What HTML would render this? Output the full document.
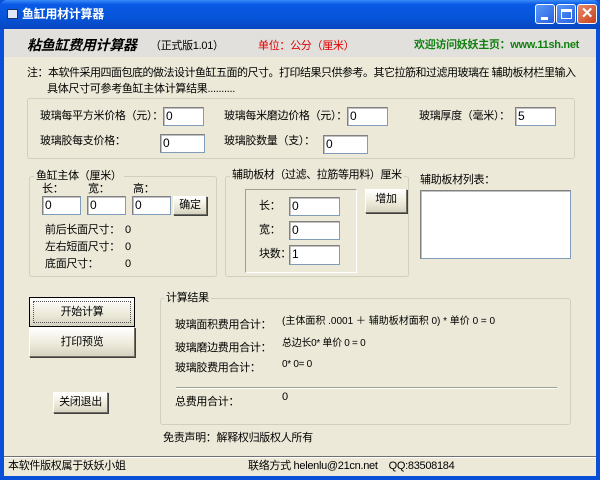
<!DOCTYPE html>
<html><head><meta charset="utf-8"><style>
*{margin:0;padding:0;box-sizing:border-box}
body{width:600px;height:480px;overflow:hidden;background:#0a4fd8;font-family:"Liberation Sans","Noto Sans CJK SC",sans-serif;font-size:11px;letter-spacing:-0.3px;color:#000;position:relative}
.a{position:absolute;white-space:nowrap;line-height:14px}
#title{position:absolute;left:0;top:0;width:600px;height:29px;background:linear-gradient(#3a8cf8 0,#0a5ae6 15%,#0654d8 60%,#0846c0 100%);border-radius:7px 7px 0 0}
#client{position:absolute;left:4px;top:29px;width:592px;height:447px;background:#ece9d8}
#hdr{position:absolute;left:4px;top:29px;width:592px;height:28px;background:#e2e0dc}
.in{position:absolute;background:#fff;border:1px solid #7f9db9;border-top-color:#808080;border-left-color:#808080;box-shadow:inset 1px 1px 0 #c0c0c0;padding-left:2px;line-height:16px;font-size:12px}
.gb{position:absolute;border:1px solid #d0d0bf;border-radius:3px}
.lg{position:absolute;background:#ece9d8;padding:0 2px;line-height:14px;white-space:nowrap}
.btn{position:absolute;background:linear-gradient(#fff,#ece9d8 60%,#d6d2c2);border:1px solid #fff;border-right-color:#716f64;border-bottom-color:#716f64;box-shadow:1px 1px 0 #404040;text-align:center}
.wb{position:absolute;top:4px;width:20px;height:20px;border:1px solid #fff;border-radius:3px;background:linear-gradient(135deg,#5b9af8,#2660e0)}
</style></head><body>
<div id="title"></div>
<div class="a" style="left:7px;top:9px;width:11px;height:10px;background:#dfe8f8;border:1px solid #203060"></div>
<div class="a" style="left:22px;top:7px;color:#fff;font-weight:bold;font-size:12px">鱼缸用材计算器</div>
<div class="wb" style="left:535px"><div style="position:absolute;left:5px;top:12px;width:7px;height:3px;background:#fff"></div></div>
<div class="wb" style="left:556px"><div style="position:absolute;left:4px;top:4px;width:11px;height:10px;border:1px solid #fff;border-top-width:3px"></div></div>
<div class="wb" style="left:577px;background:linear-gradient(135deg,#e88a6a,#c8401c);color:#fff;font-weight:bold;font-size:15px;line-height:18px;text-align:center">✕</div>
<div id="client"></div>
<div id="hdr"></div>
<div class="a" style="left:27px;top:37px;font-size:14px;font-weight:bold;font-style:italic;line-height:17px">粘鱼缸费用计算器</div>
<div class="a" style="left:150px;top:39px">（正式版1.01）</div>
<div class="a" style="left:258px;top:39px;color:#e00000">单位：公分（厘米）</div>
<div class="a" style="left:414px;top:38px;color:#108010;font-weight:bold;letter-spacing:-0.3px">欢迎访问妖妖主页：www.11sh.net</div>
<div class="a" style="left:27px;top:66px;letter-spacing:-0.5px">注：本软件采用四面包底的做法设计鱼缸五面的尺寸。打印结果只供参考。其它拉筋和过滤用玻璃在 辅助板材栏里输入</div>
<div class="a" style="left:47px;top:82px">具体尺寸可参考鱼缸主体计算结果..........</div>

<div class="gb" style="left:27px;top:98px;width:548px;height:61px"></div>
<div class="a" style="left:40px;top:109px">玻璃每平方米价格（元）：</div>
<div class="in" style="left:163px;top:107px;width:41px;height:19px">0</div>
<div class="a" style="left:224px;top:109px">玻璃每米磨边价格（元）：</div>
<div class="in" style="left:347px;top:107px;width:41px;height:19px">0</div>
<div class="a" style="left:419px;top:109px">玻璃厚度（毫米）：</div>
<div class="in" style="left:515px;top:107px;width:41px;height:19px">5</div>
<div class="a" style="left:40px;top:134px">玻璃胶每支价格：</div>
<div class="in" style="left:160px;top:134px;width:45px;height:19px">0</div>
<div class="a" style="left:224px;top:134px">玻璃胶数量（支）：</div>
<div class="in" style="left:323px;top:135px;width:45px;height:19px">0</div>

<div class="gb" style="left:29px;top:176px;width:188px;height:101px"></div>
<div class="lg" style="left:34px;top:169px">鱼缸主体（厘米）</div>
<div class="a" style="left:42px;top:182px">长：</div>
<div class="a" style="left:88px;top:182px">宽：</div>
<div class="a" style="left:133px;top:182px">高：</div>
<div class="in" style="left:42px;top:196px;width:39px;height:19px">0</div>
<div class="in" style="left:87px;top:196px;width:39px;height:19px">0</div>
<div class="in" style="left:132px;top:196px;width:39px;height:19px">0</div>
<div class="btn" style="left:173px;top:196px;width:34px;height:19px;line-height:17px">确定</div>
<div class="a" style="left:45px;top:223px">前后长面尺寸：</div><div class="a" style="left:125px;top:223px">0</div>
<div class="a" style="left:45px;top:240px">左右短面尺寸：</div><div class="a" style="left:125px;top:240px">0</div>
<div class="a" style="left:45px;top:257px">底面尺寸：</div><div class="a" style="left:125px;top:257px">0</div>

<div class="gb" style="left:225px;top:176px;width:184px;height:101px"></div>
<div class="lg" style="left:230px;top:168px;letter-spacing:-0.4px">辅助板材（过滤、拉筋等用料）厘米</div>
<div style="position:absolute;left:245px;top:189px;width:112px;height:84px;border:1px solid #a0a090;border-right-color:#fff;border-bottom-color:#fff"></div>
<div class="a" style="left:259px;top:199px">长：</div>
<div class="in" style="left:289px;top:197px;width:51px;height:19px">0</div>
<div class="a" style="left:259px;top:223px">宽：</div>
<div class="in" style="left:289px;top:221px;width:51px;height:19px">0</div>
<div class="a" style="left:259px;top:247px">块数：</div>
<div class="in" style="left:289px;top:245px;width:51px;height:20px">1</div>
<div class="btn" style="left:365px;top:189px;width:42px;height:24px;line-height:18px">增加</div>
<div class="a" style="left:420px;top:173px">辅助板材列表：</div>
<div class="in" style="left:420px;top:190px;width:151px;height:69px"></div>

<div class="btn" style="left:29px;top:297px;width:106px;height:30px;line-height:28px;border:1px solid #000;box-shadow:none"><div style="position:absolute;left:3px;top:3px;right:3px;bottom:3px;border:1px dotted #555"></div>开始计算</div>
<div class="btn" style="left:29px;top:327px;width:106px;height:30px;line-height:28px">打印预览</div>
<div class="btn" style="left:53px;top:392px;width:55px;height:21px;line-height:19px">关闭退出</div>

<div class="gb" style="left:160px;top:298px;width:411px;height:127px"></div>
<div class="lg" style="left:164px;top:291px">计算结果</div>
<div class="a" style="left:175px;top:318px">玻璃面积费用合计：</div>
<div class="a" style="left:282px;top:315px;font-size:10px;letter-spacing:0px">(主体面积 .0001 ＋ 辅助板材面积 0) * 单价 0 = 0</div>
<div class="a" style="left:175px;top:341px">玻璃磨边费用合计：</div>
<div class="a" style="left:282px;top:337px;font-size:10px">总边长0*  单价 0 = 0</div>
<div class="a" style="left:175px;top:361px">玻璃胶费用合计：</div>
<div class="a" style="left:282px;top:358px;font-size:10px">0* 0= 0</div>
<div style="position:absolute;left:176px;top:387px;width:381px;height:2px;border-top:1px solid #a0a090;border-bottom:1px solid #fff"></div>
<div class="a" style="left:175px;top:395px">总费用合计：</div>
<div class="a" style="left:282px;top:390px">0</div>
<div class="a" style="left:163px;top:431px">免责声明：解释权归版权人所有</div>

<div style="position:absolute;left:4px;top:456px;width:592px;height:2px;border-top:1px solid #707070;border-bottom:1px solid #fff"></div>
<div class="a" style="left:8px;top:459px">本软件版权属于妖妖小姐</div>
<div class="a" style="left:248px;top:459px">联络方式  helenlu@21cn.net &nbsp; &nbsp;QQ:83508184</div>
</body></html>
